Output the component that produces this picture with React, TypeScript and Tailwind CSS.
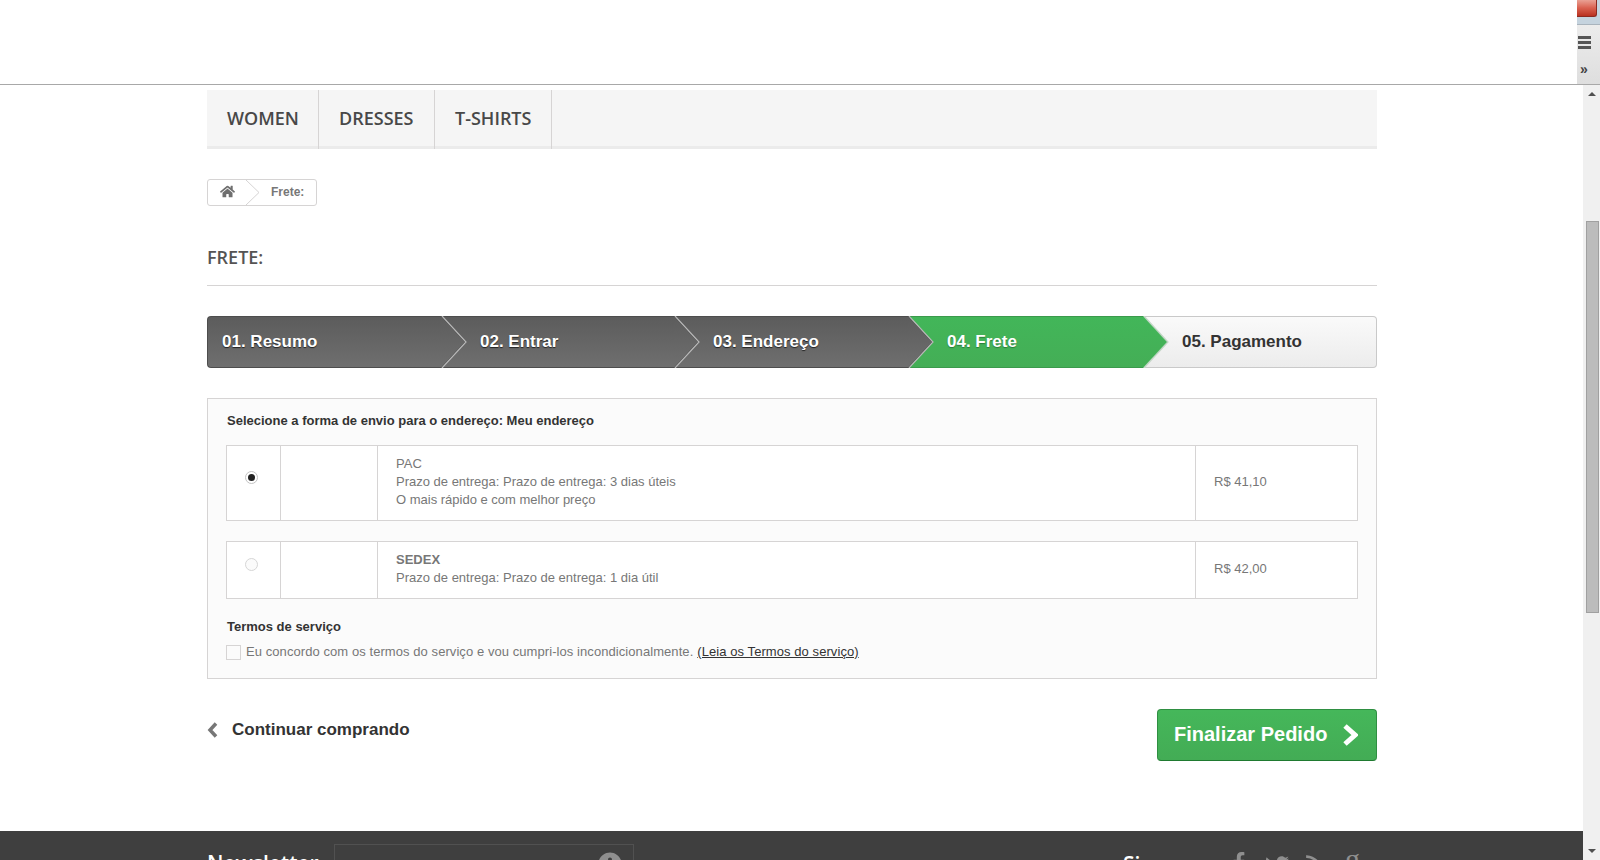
import { FaFacebookF, FaHome, FaInfoCircle, FaRss, FaTwitter } from "react-icons/fa";

const steps = [
  { label: "01. Resumo", width: "w-[235px]", pad: "pl-[14px]", kind: "done" },
  { label: "02. Entrar", width: "w-[233px]", pad: "pl-[38px]", kind: "done" },
  { label: "03. Endereço", width: "w-[234px]", pad: "pl-[38px]", kind: "done" },
  { label: "04. Frete", width: "w-[235px]", pad: "pl-[38px]", kind: "current" },
  { label: "05. Pagamento", width: "flex-1", pad: "pl-[38px]", kind: "todo" },
];

function StepArrow({ id, from, to, stroke, edge }: { id: string; from: string; to: string; stroke: string; edge: string }) {
  return (
    <svg className="absolute -top-px -right-[25px] z-10" width="26" height="52" viewBox="0 0 26 52">
      <defs>
        <linearGradient id={id} x1="0" y1="0" x2="0" y2="1">
          <stop offset="0" stopColor={from} />
          <stop offset="1" stopColor={to} />
        </linearGradient>
      </defs>
      <polygon points="0,0 25,26 0,52" fill={`url(#${id})`} />
      <polyline points="0,0 24,26 0,52" fill="none" stroke={edge} strokeWidth="1" />
      <polyline points="1,0 25,26 1,52" fill="none" stroke={stroke} strokeWidth="1.2" />
    </svg>
  );
}

function Steps() {
  return (
    <ol className="flex h-[52px] mt-[30px]">
      {steps.map((s, i) => {
        if (s.kind === "done") {
          return (
            <li
              key={s.label}
              className={`relative ${s.width} ${s.pad} flex items-center border-y border-[#4d4d4d] bg-gradient-to-b from-[#5c5c5c] to-[#6f6f6f] text-white text-[17px] font-bold [text-shadow:0_1px_1px_#222] ${i === 0 ? "rounded-l-[4px] border-l" : ""}`}
            >
              {s.label}
              <StepArrow id={`arrow-${i}`} from="#5c5c5c" to="#6f6f6f" edge="#505050" stroke="#b8b8b8" />
            </li>
          );
        }
        if (s.kind === "current") {
          return (
            <li
              key={s.label}
              className={`relative ${s.width} ${s.pad} flex items-center border-y border-[#3b9a4c] bg-gradient-to-b from-[#42b659] to-[#44ae56] text-white text-[17px] font-bold [text-shadow:0_1px_1px_#2a7a3a]`}
            >
              {s.label}
              <StepArrow id="arrow-current" from="#42b659" to="#44ae56" edge="#6cc07c" stroke="#c5d6c8" />
            </li>
          );
        }
        return (
          <li
            key={s.label}
            className={`${s.width} ${s.pad} flex items-center border border-l-0 border-[#c9c9c9] rounded-r-[4px] bg-gradient-to-b from-[#fafafa] to-[#ececec] text-[#333] text-[17px] font-bold`}
          >
            {s.label}
          </li>
        );
      })}
    </ol>
  );
}

function Radio({ checked }: { checked?: boolean }) {
  return (
    <span className={`flex items-center justify-center w-[13px] h-[13px] rounded-full border ${checked ? "border-[#c4c4c4] bg-white" : "border-[#d6d6d6] bg-[#fbfbfb]"}`}>
      {checked && <span className="w-[7px] h-[7px] rounded-full bg-[#222]" />}
    </span>
  );
}

function ShippingRow({
  name,
  lines,
  price,
  checked,
  height,
  radioPad,
  pricePad,
  nameClass,
}: {
  name: string;
  lines: string[];
  price: string;
  checked?: boolean;
  height: string;
  radioPad: string;
  pricePad: string;
  nameClass: string;
}) {
  return (
    <div className={`flex ${height} border border-[#d6d4d4] bg-white text-[13px] leading-[18px] text-[#777]`}>
      <div className={`w-[53px] shrink-0 flex pl-[18px] ${radioPad}`}>
        <Radio checked={checked} />
      </div>
      <div className="w-[97px] shrink-0 border-l border-[#d6d4d4]" />
      <div className="flex-1 border-l border-[#d6d4d4] pl-[18px] pt-[9px]">
        <p className={nameClass}>{name}</p>
        {lines.map((l) => (
          <p key={l}>{l}</p>
        ))}
      </div>
      <div className={`w-[162px] shrink-0 border-l border-[#d6d4d4] pl-[18px] ${pricePad}`}>{price}</div>
    </div>
  );
}

export default function App() {
  return (
    <div className="h-[860px] w-[1600px] overflow-hidden bg-white font-['Liberation_Sans',Arial,sans-serif]">
      <div className="relative h-[85px] border-b border-[#a8a8a8] bg-white">
        {/* browser toolbar piece */}
        <div className="absolute right-0 top-0 bottom-0 w-[23px] flex flex-col bg-gradient-to-b from-[#f2f2f2] to-[#dedede]">
          <div className="h-[25px] bg-[#c5d3de] border-b border-[#a9b4bd]">
            <div className="h-[17px] w-[20px] rounded-br-[3px] bg-gradient-to-b from-[#e9a094] via-[#d9604f] to-[#b9301f] border-r border-b border-[#8c2a20]" />
          </div>
          <div className="ml-[1px] mt-[11px] flex flex-col gap-[2px]">
            <span className="block h-[3px] w-[13px] bg-[#555]" />
            <span className="block h-[3px] w-[13px] bg-[#555]" />
            <span className="block h-[3px] w-[13px] bg-[#555]" />
          </div>
          <span className="ml-[3px] mt-[13px] text-[14px] leading-[14px] font-bold text-[#444]">»</span>
        </div>
      </div>

      <div className="flex h-[775px]">
        <div className="flex-1 flex flex-col min-w-0">
          <div className="w-[1170px] ml-[207px] h-[746px] shrink-0">
            <nav className="mt-[5px] flex h-[59px] bg-[#f5f5f5] border-b-[3px] border-[#ebebeb] font-['Open_Sans',sans-serif] text-[18px] font-semibold text-[#484848]">
              <a className="w-[112px] -mb-[3px] pl-[20px] pt-[15px] border-r border-[#d6d4d4]">WOMEN</a>
              <a className="w-[116px] -mb-[3px] pl-[20px] pt-[15px] border-r border-[#d6d4d4]">DRESSES</a>
              <a className="w-[117px] -mb-[3px] pl-[20px] pt-[15px] border-r border-[#d6d4d4]">T-SHIRTS</a>
            </nav>

            <div className="mt-[30px] flex h-[27px] w-[110px] items-center rounded-[3px] border border-[#d6d4d4] bg-white text-[12px] font-bold text-[#777]">
              <div className="relative flex h-full w-[52px] items-center pl-[12px] pb-[2px]">
                <FaHome className="text-[15px] text-[#6f6f6f]" />
                <svg className="absolute top-0 right-0" width="14" height="25" viewBox="0 0 14 25">
                  <polyline points="0,0 13,12.5 0,25" fill="none" stroke="#d6d4d4" />
                </svg>
              </div>
              <span className="ml-[11px] pb-[2px]">Frete:</span>
            </div>

            <h1 className="mt-[39px] h-[41px] border-b border-[#d6d4d4] font-['Open_Sans',sans-serif] text-[18px] leading-[24px] font-semibold text-[#555454]">
              FRETE:
            </h1>

            <Steps />

            <section className="mt-[30px] h-[281px] border border-[#d6d4d4] bg-[#fbfbfb] px-[18px] pt-[13px]">
              <p className="pl-px text-[13px] leading-[17px] font-bold text-[#333]">Selecione a forma de envio para o endereço: Meu endereço</p>
              <div className="mt-[16px]">
                <ShippingRow
                  name="PAC"
                  lines={["Prazo de entrega: Prazo de entrega: 3 dias úteis", "O mais rápido e com melhor preço"]}
                  price="R$ 41,10"
                  checked
                  height="h-[76px]"
                  radioPad="pt-[25px]"
                  pricePad="pt-[27px]"
                  nameClass=""
                />
              </div>
              <div className="mt-[20px]">
                <ShippingRow
                  name="SEDEX"
                  lines={["Prazo de entrega: Prazo de entrega: 1 dia útil"]}
                  price="R$ 42,00"
                  height="h-[58px]"
                  radioPad="pt-[16px]"
                  pricePad="pt-[18px]"
                  nameClass="font-bold"
                />
              </div>
              <p className="mt-[19px] pl-px text-[13px] leading-[18px] font-bold text-[#333]">Termos de serviço</p>
              <div className="mt-[7px] flex items-center text-[13px] leading-[18px] tracking-[0.07px] text-[#777]">
                <span className="w-[15px] h-[15px] border border-[#d6d4d4] bg-[#fbfbfb]" />
                <span className="ml-[5px]">Eu concordo com os termos do serviço e vou cumpri-los incondicionalmente.</span>
                <a className="ml-[4px] text-[#333] underline">(Leia os Termos do serviço)</a>
              </div>
            </section>

            <div className="mt-[30px] flex items-start justify-between">
              <a className="mt-[8px] flex items-center text-[17px] font-bold text-[#333]">
                <svg width="11" height="16" viewBox="0 0 11 16">
                  <polyline points="9,1.5 3,8 9,14.5" fill="none" stroke="#777" strokeWidth="3.5" />
                </svg>
                <span className="ml-[14px]">Continuar comprando</span>
              </a>
              <button className="flex h-[52px] w-[220px] items-center rounded-[4px] border border-[#2f8f42] border-b-[#1f7a30] bg-gradient-to-b from-[#45b75a] to-[#43ac55] pl-[16px] pb-[2px] text-[20px] font-bold text-white">
                Finalizar Pedido
                <svg className="ml-[15px] mt-[2px]" width="16" height="24" viewBox="0 0 16 24">
                  <polyline points="3,3 13,12 3,21" fill="none" stroke="#fff" strokeWidth="5" />
                </svg>
              </button>
            </div>
          </div>

          <footer className="flex-1 bg-[#3f3f3f] overflow-hidden">
            <div className="w-[1170px] ml-[207px] relative flex">
              <span className="mt-[20px] font-['Open_Sans',sans-serif] text-[21px] leading-[24px] font-semibold text-white">Newsletter</span>
              <div className="absolute left-[127px] top-[13px] flex h-[40px] w-[300px] justify-end border border-[#515151] pr-[11px] pt-[7px]">
                <FaInfoCircle className="text-[24px] text-[#8f8f8f]" />
              </div>
              <span className="absolute left-[916px] top-[21px] font-['Open_Sans',sans-serif] text-[21px] leading-[24px] font-semibold text-white">Siga-nos</span>
              <div className="absolute left-[1022px] top-[21px] flex items-start text-[#8f8f8f]">
                <FaFacebookF className="text-[20px]" />
                <FaTwitter className="ml-[16px] mt-[2px] text-[24px]" />
                <FaRss className="ml-[16px] mt-[2px] text-[18px]" />
                <span className="ml-[22px] -mt-[8px] font-['Liberation_Serif',serif] text-[30px] leading-[30px]">g</span>
              </div>
            </div>
          </footer>
        </div>

        {/* browser scrollbar */}
        <div className="relative w-[17px] shrink-0 bg-[#f0f0f0] flex flex-col items-center">
          <span className="mt-[7px] h-0 w-0 border-x-[4px] border-b-[4px] border-x-transparent border-b-[#505050]" />
          <div className="ml-[1px] mt-[125px] h-[392px] w-[13px] border border-[#a0a0a0] bg-[#bcbcbc]" />
          <span className="mt-auto mb-[7px] h-0 w-0 border-x-[4px] border-t-[4px] border-x-transparent border-t-[#505050]" />
        </div>
      </div>
    </div>
  );
}
